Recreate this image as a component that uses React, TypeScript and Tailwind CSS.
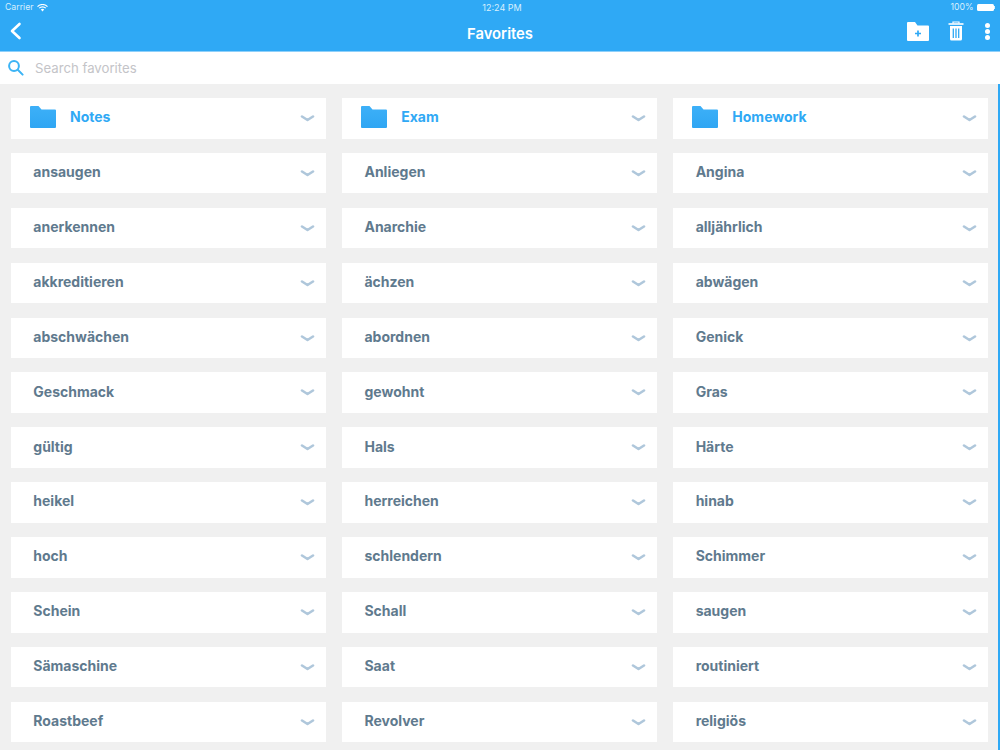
const FONT = "font-['Inter','Liberation_Sans',sans-serif]";

const folders = ["Notes", "Exam", "Homework"];

const rows = [
  ["ansaugen", "Anliegen", "Angina"],
  ["anerkennen", "Anarchie", "alljährlich"],
  ["akkreditieren", "ächzen", "abwägen"],
  ["abschwächen", "abordnen", "Genick"],
  ["Geschmack", "gewohnt", "Gras"],
  ["gültig", "Hals", "Härte"],
  ["heikel", "herreichen", "hinab"],
  ["hoch", "schlendern", "Schimmer"],
  ["Schein", "Schall", "saugen"],
  ["Sämaschine", "Saat", "routiniert"],
  ["Roastbeef", "Revolver", "religiös"],
];

function Chevron() {
  return (
    <svg width="15" height="7" viewBox="0 0 15 7" className="absolute right-[11px] top-[17px]">
      <path d="M2 1.5 L7.5 5 L13 1.5" fill="none" stroke="#afc7db" strokeWidth="2.6" strokeLinecap="round" strokeLinejoin="round" />
    </svg>
  );
}

function FolderIcon() {
  return (
    <svg width="26" height="22" viewBox="0 0 26 22" className="shrink-0">
      <defs>
        <linearGradient id="folderFill" x1="0" y1="0" x2="0" y2="1">
          <stop offset="0" stopColor="#3db0f8" />
          <stop offset="1" stopColor="#2fa6f3" />
        </linearGradient>
      </defs>
      <path d="M0 1 Q0 0 1 0 H8.5 L11.5 3.5 H25 Q26 3.5 26 4.5 V21 Q26 22 25 22 H1 Q0 22 0 21 Z" fill="url(#folderFill)" />
    </svg>
  );
}

function FolderCard({ name }: { name: string }) {
  return (
    <div className="relative flex h-[40.5px] items-center bg-white pb-[2px] pl-[19px]">
      <FolderIcon />
      <span className="-mt-[1px] ml-[14px] text-[14px] font-bold text-[#30a9f5]">{name}</span>
      <Chevron />
    </div>
  );
}

function WordCard({ word }: { word: string }) {
  return (
    <div className="relative flex h-[40.5px] items-center bg-white pb-[3px] pl-[22.3px]">
      <span className="text-[14px] font-bold text-[#5f7a8e]">{word}</span>
      <Chevron />
    </div>
  );
}

export default function App() {
  return (
    <div className={`flex h-[750px] w-[1000px] flex-col overflow-hidden bg-[#f0f0f0] ${FONT}`}>
      <header className="h-[52px] shrink-0 border-b border-[#8fd0fa] bg-[#2fa9f5] text-white">
        <div className="flex h-[15px] items-center justify-between px-[5px] pt-[1px] text-[8.7px] text-[#d9effd]">
          <div className="flex flex-1 items-center gap-[4px]">
            <span>Carrier</span>
            <svg width="11" height="8" viewBox="0 0 11 8">
              <path d="M0.5 2.6 A7 7 0 0 1 10.5 2.6 M2.2 4.2 A4.6 4.6 0 0 1 8.8 4.2" fill="none" stroke="white" strokeWidth="1.2" />
              <path d="M3.8 5.6 A2.4 2.4 0 0 1 7.2 5.6 L5.5 7.6 Z" fill="white" />
            </svg>
          </div>
          <span className="flex-1 pl-[4px] text-center text-[9px]">12:24 PM</span>
          <div className="flex flex-1 items-center justify-end gap-[3px]">
            <span>100%</span>
            <div className="flex items-center">
              <div className="h-[7px] w-[17px] rounded-[1.5px] bg-white" />
              <div className="ml-[0.5px] h-[3px] w-[1px] bg-[#d9effd]" />
            </div>
          </div>
        </div>
        <div className="relative flex h-[36px] items-center justify-between pl-[9px] pr-[10px]">
          <svg width="13" height="18" viewBox="0 0 13 18" className="-mt-[4px]">
            <path d="M10.5 2 L3 9 L10.5 16" fill="none" stroke="white" strokeWidth="2.6" strokeLinecap="round" strokeLinejoin="round" />
          </svg>
          <div className="absolute inset-x-0 top-[8px] text-center text-[14.8px] font-semibold">Favorites</div>
          <div className="-mt-[4px] flex items-center">
            <svg width="22" height="19" viewBox="0 0 22 19">
              <path d="M0 1 Q0 0 1 0 H8 L10.5 3.5 H21 Q22 3.5 22 4.5 V18 Q22 19 21 19 H1 Q0 19 0 18 Z" fill="white" />
              <path d="M11 8.5 V14.5 M8 11.5 H14" stroke="#2fa9f5" strokeWidth="1.7" />
            </svg>
            <svg width="16" height="20" viewBox="0 0 16 20" className="ml-[19px]">
              <path d="M0.5 3 H15.5" stroke="white" strokeWidth="1.6" />
              <path d="M5 2.5 V1 H11 V2.5" fill="none" stroke="white" strokeWidth="1.2" />
              <path d="M2 5 H14 V18 Q14 19.5 12.5 19.5 H3.5 Q2 19.5 2 18 Z" fill="white" />
              <path d="M5.3 7.5 V17 M8 7.5 V17 M10.7 7.5 V17" stroke="#2fa9f5" strokeWidth="1.3" />
            </svg>
            <div className="ml-[21px] flex flex-col gap-[1px]">
              <div className="size-[5px] rounded-full bg-white" />
              <div className="size-[5px] rounded-full bg-white" />
              <div className="size-[5px] rounded-full bg-white" />
            </div>
          </div>
        </div>
      </header>
      <div className="flex h-[32px] shrink-0 items-center bg-white pl-[8px]">
        <svg width="16" height="16" viewBox="0 0 16 16">
          <circle cx="6" cy="6" r="4.9" fill="none" stroke="#3cb4f5" strokeWidth="2" />
          <path d="M9.8 9.8 L14.6 14.6" stroke="#3cb4f5" strokeWidth="2" strokeLinecap="round" />
        </svg>
        <span className="ml-[11px] mt-[1px] text-[13.2px] text-[#c4c4c8]">Search favorites</span>
      </div>
      <main className="flex-1 border-r-2 border-[#2fa9f5] pl-[11px] pr-[9.5px] pt-[14px]">
        <div className="grid grid-cols-3 gap-x-[16px] gap-y-[14.4px]">
          {folders.map((f) => (
            <FolderCard key={f} name={f} />
          ))}
          {rows.flat().map((w) => (
            <WordCard key={w} word={w} />
          ))}
        </div>
      </main>
    </div>
  );
}
